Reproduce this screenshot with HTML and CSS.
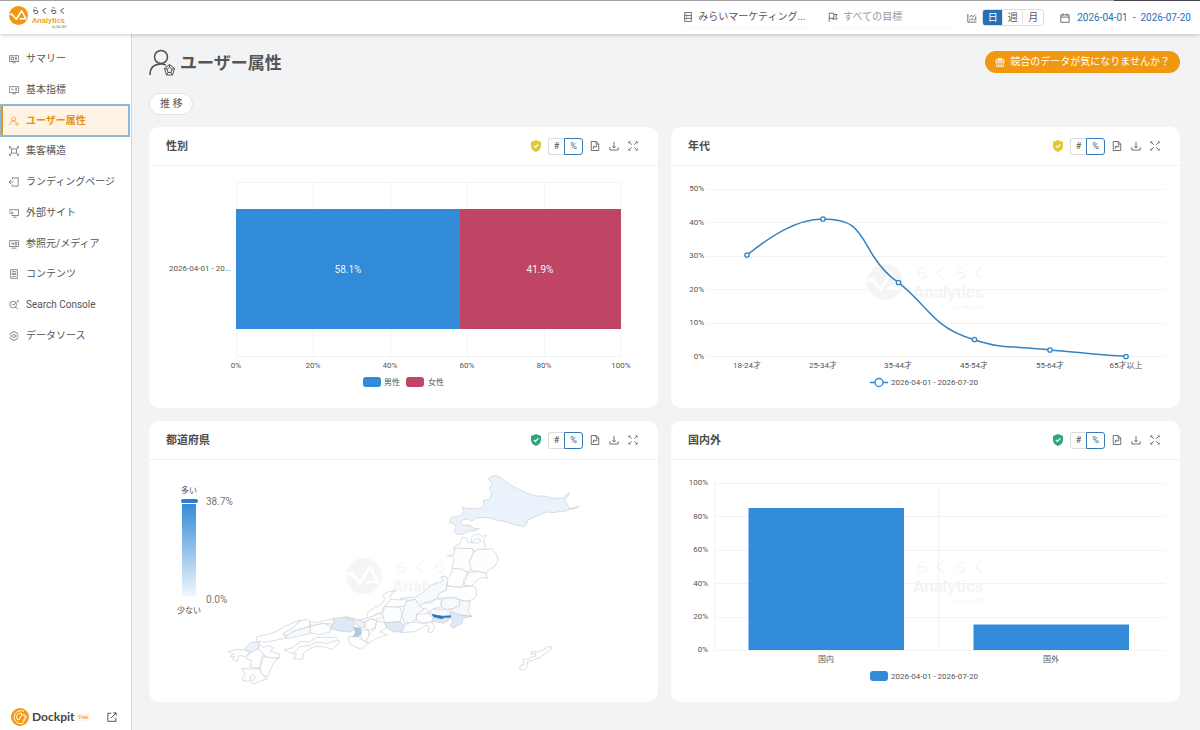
FILE: index.html
```html
<!DOCTYPE html>
<html lang="ja">
<head>
<meta charset="utf-8">
<meta name="viewport" content="width=device-width, initial-scale=1">
<title>ユーザー属性 | らくらくAnalytics</title>
<link rel="stylesheet" href="styles.css">
</head>
<body>
<svg class="defs" aria-hidden="true">
  <symbol id="mark" viewBox="0 0 36 36">
    <circle cx="18" cy="18" r="18" fill="currentColor"/>
    <path d="M1 17l4-2 9 10 10-16 8 15H20" fill="none" stroke="#fff" stroke-width="3" stroke-linejoin="round"/>
  </symbol>
  <symbol id="watermark" viewBox="0 0 130 56">
    <use href="#mark" x="0" y="2" width="36" height="36"/>
    <text class="wm-kana" x="48 67 86 105" y="16">らくらく</text>
    <text class="wm-name" x="46" y="36">Analytics</text>
    <text class="wm-by" x="87" y="47">by VALUES</text>
  </symbol>
  <symbol id="i-shield" viewBox="0 0 10 12">
    <path d="M5 0l5 2v4c0 3-2 5-5 6-3-1-5-3-5-6V2z" fill="currentColor"/>
    <path d="M2.800 5.800l1.600 1.600 3-3" fill="none" stroke="#fff" stroke-width="1.200"/>
  </symbol>
  <symbol id="i-file" viewBox="0 0 12 12"><path d="M1.500 .6h6L10.500 3.600v7.800h-9zM7.300.8v3h3M4 9.500V7h4V5M4 7l1.500-1.500"/></symbol>
  <symbol id="i-down" viewBox="0 0 12 12"><path d="M1 7.500v3.300h10V7.500M6 1v7M4 6.500L6 8.300 8 6.500"/></symbol>
  <symbol id="i-expand" viewBox="0 0 12 12"><path d="M1.500 1.500l3 3M10.500 1.500l-3 3M1.500 10.500l3-3M10.500 10.500l-3-3M1 2.800V1h1.800M9.200 1H11v1.800M1 9.200V11h1.800M9.200 11H11V9.200"/></symbol>
  <symbol id="i-user" viewBox="0 0 26 28">
    <circle cx="12" cy="8" r="6.500"/><path d="M1 26c0-7 4-11 11-11 2 0 4 .5 5 1.500"/>
    <path d="M20.500 15.500l5 4-2 6.500h-6l-2-6.500zM20.500 18l2.500 2.200-1 3.300h-3l-1-3.300zM20.500 15.500V18M25.500 19.500l-2.500.7M23.500 26l-1.500-2.500M17.500 26l1.500-2.500M15.500 19.500l2.500.7" stroke-width="1"/>
  </symbol>
</svg>

<header class="topbar">
  <a class="brand" href="#" aria-label="らくらくAnalytics">
    <svg width="60" height="26" viewBox="0 0 60 26">
      <use class="brand-mark" href="#mark" x="0" y="2" width="19" height="19"/>
      <text class="brand-kana" x="23 32 41 50" y="9">らくらく</text>
      <text class="brand-name" x="23" y="19">Analytics</text>
      <text class="brand-by" x="43" y="24">by VALUES</text>
    </svg>
  </a>
  <div class="filters">
    <label class="picker picker-project">
      <svg class="icon" viewBox="0 0 12 12"><path d="M2 .5h8v11H2zM2 4.300h8M2 7.600h8M4 2.600h.8M4 6h.8M4 9.300h.8"/></svg>
      <select aria-label="プロジェクト"><option>みらいマーケティング...</option></select>
    </label>
    <label class="picker picker-goal">
      <svg class="icon" viewBox="0 0 12 12"><path d="M1.500 11.500V1.500h5.500v6H1.500M7 3h4L9.500 5.500 11 8.500H5.500v-1"/></svg>
      <select aria-label="目標"><option>すべての目標</option></select>
    </label>
    <div class="unit">
      <svg class="icon" viewBox="0 0 12 12"><path d="M1 1v10h10.500M3.500 9V7M6 9V5.500M8.500 9V7M10.500 9V4M3 4.500l2.500-1.500 2 1.500L10 2"/></svg>
      <div class="segment" role="group" aria-label="集計単位">
        <button class="on" type="button">日</button><button type="button">週</button><button type="button">月</button>
      </div>
    </div>
    <button class="range" type="button">
      <svg class="icon" viewBox="0 0 12 12"><path d="M1 2.200h10v9H1zM1 5h10M3.500.5v3M8.500.5v3"/></svg>
      <span>2026-04-01</span><span>-</span><span>2026-07-20</span>
    </button>
  </div>
</header>

<div class="layout">
  <aside class="sidebar">
    <nav class="menu" aria-label="メニュー">
      <a href="#"><svg class="icon" viewBox="0 0 12 12"><path d="M.5 2h11v7H.5zM4 10.500h4M2.500 4h3v3h-3zM7 4h2.500M7 5.500h2.500M7 7h2.500"/></svg>サマリー</a>
      <a href="#"><svg class="icon" viewBox="0 0 12 12"><path d="M.5 2h11v7H.5zM4 10.500h4M2.500 5h2l1 1.500M7.500 4h2M7.500 5.500h2M7.500 7h2"/></svg>基本指標</a>
      <a class="current" href="#" aria-current="page"><svg class="icon" viewBox="0 0 12 12"><circle cx="5.500" cy="3.500" r="2.500"/><path d="M1 11c0-3 1.500-5 4.500-5 1.200 0 2 .4 2.800 1"/><circle cx="9.500" cy="9.500" r="1.500"/></svg>ユーザー属性</a>
      <a href="#"><svg class="icon" viewBox="0 0 12 12"><path d="M3 3.500h6v5H3zM1 1l2 2.500M11 1L9 3.500M1 11l2-2.500M11 11L9 8.500M.5 3V.8h2M9.500.8h2V3M.5 9v2.200h2M9.500 11.200h2V9"/></svg>集客構造</a>
      <a href="#"><svg class="icon" viewBox="0 0 12 12"><path d="M4 3V1h7v10H4V9M0 6h5M2.500 3.500L0 6l2.500 2.500"/></svg>ランディングページ</a>
      <a href="#"><svg class="icon" viewBox="0 0 12 12"><path d="M1 4V2h10.500v7H3M5 11h4M0 6h4M3 4l2 2-2 2"/></svg>外部サイト</a>
      <a href="#"><svg class="icon" viewBox="0 0 12 12"><path d="M.5 2h11v7H.5zM3 11h6M2.500 5.500h3M4.500 4l1.500 1.500L4.500 7M7.500 4h2v3h-2z"/></svg>参照元/メディア</a>
      <a href="#"><svg class="icon" viewBox="0 0 12 12"><path d="M2 .8h8v10.400H2zM4 3h4M4 5h4v1.500H4zM4 9h4"/></svg>コンテンツ</a>
      <a href="#"><svg class="icon" viewBox="0 0 12 12"><circle cx="5" cy="5.500" r="4"/><path d="M8 8.500l3 3M3 6l1.500-1L6 6l3-3.500M9.500.5h2M11 1v2"/></svg>Search Console</a>
      <a href="#"><svg class="icon" viewBox="0 0 12 12"><path d="M4.800.7h2.400l.5 1.600 1.700-.4 1.300 2.200L9.600 5.400v1.200l1.100 1.300-1.300 2.200-1.700-.4-.5 1.600H4.800l-.5-1.600-1.700.4-1.300-2.200 1.100-1.300V5.400L1.300 4.100l1.300-2.200 1.700.4z"/><circle cx="6" cy="6" r="1.800"/></svg>データソース</a>
    </nav>
    <div class="sidebar-foot">
      <a class="dockpit" href="#">
        <svg width="18" height="18" viewBox="0 0 18 18"><circle cx="9" cy="9" r="9" fill="#f29a11"/><path d="M13 3.500A6.500 6.500 0 1 0 12.500 15M10 5a4 4 0 0 0-3 7l2-1v-2l2-1z" fill="none" stroke="#fff"/><path d="M12 6l3 3-3 5" fill="none" stroke="#ffe0ae" stroke-width="2"/></svg>
        <strong>Dockpit</strong><small>Free</small>
      </a>
      <a class="external" href="#" aria-label="別タブで開く"><svg class="icon" viewBox="0 0 12 12"><path d="M5 1.500H1v9.700h9.700V7M4.500 7.500l6-6M7.500 1H11v3.500"/></svg></a>
    </div>
  </aside>

  <main class="content">
    <div class="heading">
      <h1><svg class="icon-title" viewBox="0 0 26 28"><use href="#i-user"/></svg>ユーザー属性</h1>
      <button class="promo" type="button"><svg class="icon" viewBox="0 0 12 12"><path d="M1 3.500h10V6H1zM2 6v5.300h8V6M4.700 3.500v7.800M7.300 3.500v7.800M6 3.500C4 3.500 3 2.500 3.500 1.500S6 1.500 6 3.500c0-2 2-3 2.500-2S8 3.500 6 3.500"/></svg>競合のデータが気になりませんか？</button>
    </div>
    <button class="trend" type="button">推 移</button>

    <div class="cards">
      <section class="card">
        <header class="card-head"><h2>性別</h2>
          <div class="tools">
            <svg class="shield warn" viewBox="0 0 10 12"><use href="#i-shield"/></svg>
            <div class="mode" role="group" aria-label="表示形式"><button type="button">#</button><button class="on" type="button">%</button></div>
            <div class="actions">
              <button type="button" aria-label="レポート"><svg class="icon"><use href="#i-file"/></svg></button>
              <button type="button" aria-label="ダウンロード"><svg class="icon"><use href="#i-down"/></svg></button>
              <button type="button" aria-label="拡大"><svg class="icon"><use href="#i-expand"/></svg></button>
            </div>
          </div>
        </header>
        <svg class="chart" viewBox="0 0 509 242" role="img" aria-label="性別の割合">
          <path class="grid" d="M87.500 16.500h384M87.500 190.500h384M87.500 16.500v174M164.500 16.500v174M241.500 16.500v174M318.500 16.500v174M395.500 16.500v174M471.500 16.500v174"/>
          <rect class="blue" x="87" y="43" width="224" height="120"/>
          <rect class="red" x="311" y="43" width="161" height="120"/>
          <text class="end" x="82" y="105">2026-04-01 - 20...</text>
          <g class="mid value"><text x="199" y="107">58.1%</text><text x="391" y="107">41.9%</text></g>
          <g class="mid"><text x="87" y="202">0%</text><text x="164" y="202">20%</text><text x="241" y="202">40%</text><text x="318" y="202">60%</text><text x="395" y="202">80%</text><text x="472" y="202">100%</text></g>
          <rect class="blue" x="214" y="211" width="18" height="10" rx="3"/><text x="235" y="219">男性</text>
          <rect class="red" x="257" y="211" width="18" height="10" rx="3"/><text x="279" y="219">女性</text>
        </svg>
      </section>

      <section class="card">
        <header class="card-head"><h2>年代</h2>
          <div class="tools">
            <svg class="shield warn" viewBox="0 0 10 12"><use href="#i-shield"/></svg>
            <div class="mode" role="group" aria-label="表示形式"><button type="button">#</button><button class="on" type="button">%</button></div>
            <div class="actions">
              <button type="button" aria-label="レポート"><svg class="icon"><use href="#i-file"/></svg></button>
              <button type="button" aria-label="ダウンロード"><svg class="icon"><use href="#i-down"/></svg></button>
              <button type="button" aria-label="拡大"><svg class="icon"><use href="#i-expand"/></svg></button>
            </div>
          </div>
        </header>
        <svg class="chart" viewBox="0 0 509 242" role="img" aria-label="年代の割合">
          <path class="grid" d="M37 23.500h457M37 56.500h457M37 90.500h457M37 123.500h457M37 157.500h457M37 190.500h457"/>
          <use class="wm" href="#watermark" x="196" y="96" width="130" height="56"/>
          <g class="end"><text x="33" y="25">50%</text><text x="33" y="59">40%</text><text x="33" y="92">30%</text><text x="33" y="126">20%</text><text x="33" y="159">10%</text><text x="33" y="193">0%</text></g>
          <path class="line" transform="translate(-1 4) scale(.33333)" d="M231 255C300 200 380 147 458 147C560 147 565 185 610 258C632 292 655 318 685 337C740 380 770 425 810 458C840 483 870 497 913 509C985 533 1010 529 1060 533C1110 536 1130 538 1140 540C1210 545 1290 556 1368 559"/>
          <g class="dots"><circle cx="76" cy="89" r="2.200"/><circle cx="152" cy="53" r="2.200"/><circle cx="227.500" cy="116.500" r="2.200"/><circle cx="303.500" cy="173.500" r="2.200"/><circle cx="379" cy="184" r="2.200"/><circle cx="455" cy="190.500" r="2.200"/></g>
          <g class="mid"><text x="76" y="202">18-24才</text><text x="152" y="202">25-34才</text><text x="227" y="202">35-44才</text><text x="303" y="202">45-54才</text><text x="379" y="202">55-64才</text><text x="455" y="202">65才以上</text></g>
          <path class="line" d="M199 216.500h18"/><g class="dots"><circle cx="208" cy="216.500" r="4"/></g>
          <text x="220" y="219">2026-04-01 - 2026-07-20</text>
        </svg>
      </section>

      <section class="card">
        <header class="card-head"><h2>都道府県</h2>
          <div class="tools">
            <svg class="shield good" viewBox="0 0 10 12"><use href="#i-shield"/></svg>
            <div class="mode" role="group" aria-label="表示形式"><button type="button">#</button><button class="on" type="button">%</button></div>
            <div class="actions">
              <button type="button" aria-label="レポート"><svg class="icon"><use href="#i-file"/></svg></button>
              <button type="button" aria-label="ダウンロード"><svg class="icon"><use href="#i-down"/></svg></button>
              <button type="button" aria-label="拡大"><svg class="icon"><use href="#i-expand"/></svg></button>
            </div>
          </div>
        </header>
        <svg class="chart" viewBox="0 0 509 242" role="img" aria-label="都道府県の割合">
          <defs><linearGradient id="scale" x1="0" y1="0" x2="0" y2="1"><stop offset="0" stop-color="#358cd8"/><stop offset="1" stop-color="#f1f7fd"/></linearGradient></defs>
          <use class="wm" href="#watermark" x="197" y="96" width="130" height="56"/>
          <text class="mid" x="40" y="33">多い</text>
          <rect x="32" y="39" width="17" height="4" rx="2" fill="#2b7fc8"/>
          <rect x="33" y="44" width="14" height="92" fill="url(#scale)"/>
          <text class="mid" x="40" y="153">少ない</text>
          <g class="scale-value"><text x="57" y="45">38.7%</text><text x="57" y="143">0.0%</text></g>
          <!-- 東日本 -->
          <g class="map" transform="translate(251 0) scale(.33333)">
            <path class="l2" d="M265 58L270 50 290 47 302 53 318 66 345 82 380 100 410 108 435 108 462 116 490 113 508 98 506 104 494 120 500 130 508 146 520 143 538 139 525 146 508 148 500 152 480 156 474 153 468 158 440 156 410 168 385 180 375 199 350 196 320 186 290 180 260 172 230 174 215 184 205 178 190 178 182 188 190 196 210 196 222 206 238 206 225 212 205 214 190 222 172 223 162 214 168 202 160 190 148 188 154 172 178 168 192 156 186 142 205 146 240 146 252 138 250 122 268 118 275 98 268 84 278 68Z"/>
            <path d="M186 233L200 234 204 248 216 248 226 236 240 238 242 246 228 250 216 248 212 234 222 224 240 223 244 229 258 226 250 240 258 268 235 268 222 276 218 266 160 266 165 258 180 252Z"/>
            <path d="M165 264L218 266 220 280 210 300 214 328 200 336 186 328 160 325 156 320 162 300 158 290 142 287 162 284Z"/>
            <path d="M222 276L235 268 258 268 276 266 290 284 294 300 286 318 266 330 258 340 232 334 214 332 208 305Z"/>
            <path d="M156 325L186 328 204 338 198 350 190 362 192 372 180 382 160 380 140 376 144 368 136 362 145 352 152 345Z"/>
            <path d="M204 338L232 334 258 340 262 356 246 352 228 362 216 378 192 376 196 362 200 350Z"/>
            <path class="l1" d="M124 366L128 362 124 350 136 348 144 360 140 376 140 390 118 400 112 416 90 424 72 430 60 440 45 418 20 424 0 415 20 412 45 412 70 396 92 376Z"/>
            <path d="M140 378L180 382 216 378 228 385 230 405 220 418 200 424 165 414 140 412 112 416 118 400 140 390Z"/>
            <path class="l1" d="M126 418L160 412 178 420 180 436 160 446 138 448 122 440Z"/>
            <path class="l1" d="M178 422L200 424 210 422 208 436 205 455 216 469 190 466 160 456 146 450 162 446 180 436Z"/>
            <path d="M60 436L72 430 94 428 110 416 124 420 122 440 100 446 84 458 78 446 66 446Z"/>
            <path class="l1" d="M84 458L100 447 138 448 150 460 152 468 120 468 96 462Z"/>
            <path class="l3" d="M150 468L152 456 170 464 216 469 190 474 186 490 160 504 150 498 158 484Z"/>
            <path class="l3" d="M98 472L128 477 148 474 146 482 130 490 98 484Z"/>
            <path d="M50 464L84 460 98 472 96 486 70 490 48 480Z"/>
            <path d="M0 518L10 500 30 486 70 490 96 486 104 502 95 518 84 516 88 500 78 496 64 505 45 515Z"/>
            <path class="l1" d="M6 428L20 424 45 418 62 440 72 450 50 462 48 480 34 488 14 490 6 470 12 445Z"/>
            <path class="l6" d="M96 463L110 466 128 469 152 467 152 472 135 472 125 476 100 470Z"/>
            <path d="M358 628L362 616 372 614 368 600 376 596 384 600 390 592 405 590 408 582 392 582 396 574 410 576 425 572 442 560 454 560 452 570 436 580 420 592 400 600 382 606 384 618 372 630Z"/>
          </g>
          <!-- 西日本 -->
          <g class="map" transform="translate(1 10) scale(.33333)">
            <path d="M650 440L655 425 690 405 706 388 698 376 712 366 738 362 722 374 722 388 712 400 700 412 698 425 680 432 655 445Z"/>
            <path d="M712 400L722 388 748 390 770 388 764 408 735 412 706 410Z"/>
            <path d="M698 425L706 410 750 412 756 430 750 455 704 458 700 440Z"/>
            <path class="l3" d="M704 458L750 455 762 465 758 484 735 486 710 474Z"/>
            <path d="M625 450L655 444 690 430 700 440 680 448 660 448 640 458Z"/>
            <path d="M645 455L665 447 680 455 676 474 655 480 645 470Z"/>
            <path d="M676 474L680 452 704 458 710 474 690 486 712 494 680 505 655 520 648 510 660 490Z"/>
            <path class="l2" d="M585 440L610 445 640 455 645 470 636 474 620 465 612 450Z"/>
            <path class="l3" d="M548 446L585 442 610 452 614 478 600 486 560 482 542 476Z"/>
            <path d="M634 480L655 480 656 500 645 515 632 505Z"/>
            <path d="M594 500L625 500 645 515 655 520 635 538 600 524Z"/>
            <path class="l5" d="M612 472L632 474 634 492 625 500 608 500 616 488Z"/>
            <path d="M480 454L500 458 548 446 552 462 520 460 482 468Z"/>
            <path d="M480 470L520 460 542 468 540 486 510 494 480 488Z"/>
            <path d="M400 490L430 470 452 452 470 448 480 454 480 468 430 484 408 498Z"/>
            <path class="l1" d="M408 498L430 484 480 470 480 490 440 500 410 506Z"/>
            <path d="M320 500L350 494 375 486 400 470 450 450 430 474 400 490 408 504 380 510 350 516 320 514Z"/>
            <path d="M402 540L430 532 450 515 480 516 500 502 560 502 570 518 545 538 520 530 490 530 460 550 458 568 430 566 440 552 420 548ZM430 550L450 530 480 526 500 516 530 520 565 510"/>
            <path class="l2" d="M290 530L300 518 328 516 325 532 312 545 285 540Z"/>
            <path d="M234 545L260 538 285 540 300 548 285 560 268 556 262 575 246 566 256 558 240 560 250 552Z"/>
            <path d="M328 524L340 532 355 526 370 534 362 544 388 552 388 562 360 566 335 550 325 534Z"/>
            <path d="M300 548L325 536 340 552 332 575 328 595 300 590 305 572 288 565Z"/>
            <path d="M340 560L386 566 370 580 352 622 335 612 330 595Z"/>
            <path d="M276 596L328 597 335 612 350 626 312 642 302 638 316 624 310 614 300 618 304 632 292 634 276 630 285 612Z"/>
          </g>
        </svg>
      </section>

      <section class="card">
        <header class="card-head"><h2>国内外</h2>
          <div class="tools">
            <svg class="shield good" viewBox="0 0 10 12"><use href="#i-shield"/></svg>
            <div class="mode" role="group" aria-label="表示形式"><button type="button">#</button><button class="on" type="button">%</button></div>
            <div class="actions">
              <button type="button" aria-label="レポート"><svg class="icon"><use href="#i-file"/></svg></button>
              <button type="button" aria-label="ダウンロード"><svg class="icon"><use href="#i-down"/></svg></button>
              <button type="button" aria-label="拡大"><svg class="icon"><use href="#i-expand"/></svg></button>
            </div>
          </div>
        </header>
        <svg class="chart" viewBox="0 0 509 242" role="img" aria-label="国内外の割合">
          <path class="grid" d="M43 23.500h451M43 56.500h451M43 90.500h451M43 123.500h451M43 157.500h451M43 190.500h451M43.500 23v167M267.500 23v167"/>
          <use class="wm" href="#watermark" x="196" y="96" width="130" height="56"/>
          <rect class="blue" x="77.500" y="48" width="155.500" height="142"/>
          <rect class="blue" x="302.500" y="164.500" width="155.500" height="25.500"/>
          <g class="end"><text x="37" y="25">100%</text><text x="37" y="59">80%</text><text x="37" y="92">60%</text><text x="37" y="126">40%</text><text x="37" y="159">20%</text><text x="37" y="192">0%</text></g>
          <g class="mid"><text x="155" y="202">国内</text><text x="380" y="202">国外</text></g>
          <rect class="blue" x="199" y="211" width="18" height="10" rx="3"/><text x="220" y="219">2026-04-01 - 2026-07-20</text>
        </svg>
      </section>
    </div>
  </main>
</div>
</body>
</html>
```

FILE: styles.css
```css
* { box-sizing: border-box; }

body {
  margin: 0;
  min-height: 100vh;
  display: flex;
  flex-direction: column;
  background: #f1f3f5;
  color: #555;
  font: 10px/16px Roboto, "Noto Sans CJK JP", sans-serif;
}

a { color: inherit; text-decoration: none; }

button, select {
  padding: 0;
  border: 0;
  background: none;
  color: inherit;
  font: inherit;
  appearance: none;
}

.defs { position: absolute; width: 0; height: 0; }

.icon {
  display: block;
  flex: none;
  width: 10px;
  height: 10px;
  fill: none;
  stroke: currentColor;
  stroke-width: 1;
}

/* Top bar */
.topbar {
  position: relative;
  display: flex;
  align-items: center;
  justify-content: space-between;
  height: 34px;
  padding: 0 9px;
  background: linear-gradient(to right, #a3a2a4 calc(100% - 86px), #47474c 0) top / 100% 1px no-repeat #fff;
  box-shadow: 0 1px 4px rgba(0, 0, 0, .22);
}

.brand svg { display: block; overflow: visible; }
.brand-mark { color: #f0980f; }
.brand-kana { font-size: 7px; fill: #444; font-weight: 500; }
.brand-name { font-size: 8px; fill: #f0980f; font-weight: 500; }
.brand-by { font-size: 3px; fill: #3b9a58; }

.filters { display: flex; align-items: center; padding-top: 1px; }
.picker { display: flex; align-items: center; gap: 5px; height: 22px; border-bottom: 1px solid #f6f6f6; }
.picker-project { width: 129px; margin-right: 16px; }
.picker-goal { width: 123px; margin-right: 16px; }
.picker-goal select { color: #999; }
.picker select { flex: 1; min-width: 0; }
.unit { display: flex; align-items: center; gap: 5px; margin-right: 16px; }

.segment { display: flex; border: 1px solid #ddd; border-radius: 3px; overflow: hidden; }
.segment button { width: 20px; height: 15px; line-height: 15px; border-right: 1px solid #e3e3e3; }
.segment button:last-child { border-right: 0; }
.segment .on { background: #2470b7; color: #fff; }

.range { display: flex; align-items: center; gap: 5px; color: #2b6fae; }
.range .icon { color: #555; margin-right: 2px; }

/* Sidebar */
.layout { display: flex; flex: 1; }

.sidebar {
  display: flex;
  flex-direction: column;
  justify-content: space-between;
  flex: none;
  width: 132px;
  padding: 10px 2px 4px 0;
  background: #fff;
  border-right: 1px solid #d6d9dc;
}

.menu { display: grid; grid-auto-rows: 1fr; height: 307px; }
.menu a { display: flex; align-items: center; gap: 7px; padding-left: 9px; }
.menu .icon { stroke-width: .8px; }
.menu .current {
  background: linear-gradient(to right, #e5961d 3px, #fff3e3 0);
  outline: 2px solid #8cb9d9;
  outline-offset: -1px;
  color: #ea920f;
  font-weight: 700;
}

.sidebar-foot { display: flex; align-items: center; justify-content: space-between; padding: 0 12px 0 11px; }
.dockpit { display: flex; align-items: center; gap: 3px; }
.dockpit strong { font: 700 12px/18px Lato, sans-serif; color: #444; }
.dockpit small { padding: 0 1px; background: #fff7e8; color: #f29a11; font-size: 5px; line-height: 8px; }
.external { color: #333; }

/* Page content */
.content { flex: 1; min-width: 0; padding: 14px 20px 28px 17px; }
.heading { display: flex; align-items: center; justify-content: space-between; height: 28px; margin-bottom: 17px; }

h1 { display: flex; align-items: center; gap: 5px; margin: 0; padding-top: 2px; font-size: 17px; line-height: 28px; color: #555; }
.icon-title { width: 26px; height: 28px; fill: none; stroke: #505050; stroke-width: 1.500px; }

.promo {
  display: flex;
  align-items: center;
  gap: 5px;
  height: 22px;
  padding: 0 10px;
  border-radius: 11px;
  background: #f0980f;
  color: #fff;
}

.trend {
  display: block;
  height: 22px;
  margin-bottom: 12px;
  padding: 0 10px;
  border: 1px solid #e2e4e6;
  border-radius: 11px;
  background: #fff;
}

.cards { display: grid; grid-template-columns: 1fr 1fr; gap: 13px; }
.card { min-width: 0; background: #fff; border-radius: 10px; }

.card-head {
  display: flex;
  align-items: center;
  justify-content: space-between;
  height: 39px;
  padding: 0 20px 0 17px;
  border-bottom: 1px solid #f0f1f2;
}

h2 { margin: 0; padding-top: 2px; font-size: 11px; line-height: 16px; color: #4d4d4d; }

.tools { display: flex; align-items: center; gap: 7px; }
.shield { width: 10px; height: 12px; }
.warn { color: #e0c92e; }
.good { color: #2fa581; }

.mode { display: flex; }
.mode button { height: 17px; font-size: 9px; line-height: 15px; border: 1px solid #dcdfe2; }
.mode button:first-child { width: 16px; border-right: 0; border-radius: 3px 0 0 3px; }
.mode .on { width: 19px; border-color: #3a78b3; border-radius: 0 3px 3px 0; color: #2b6fae; }

.actions { display: flex; gap: 9px; }

/* Charts */
.chart { display: block; width: 100%; height: auto; font-size: 8px; fill: #555; }
.grid { fill: none; stroke: #f3f3f4; }
.blue { fill: #318bd8; }
.red { fill: #c04564; }
.end { text-anchor: end; }
.mid { text-anchor: middle; }
.value { font-size: 10px; fill: #eef3f8; }
.scale-value { font-size: 10px; fill: #777; }
.line { fill: none; stroke: #3384c4; stroke-width: 1.500px; vector-effect: non-scaling-stroke; }
.dots { fill: #fff; stroke: #3384c4; stroke-width: 1.300px; }

.wm { color: #f5f5f6; fill: #f4f4f5; }
.wm-kana { font-size: 14px; }
.wm-name { font-size: 17px; font-weight: 700; }
.wm-by { font-size: 6px; }

.map path { fill: #fdfeff; stroke: #c8c8cb; stroke-width: .6px; stroke-linejoin: round; vector-effect: non-scaling-stroke; }
.map .l1 { fill: #f5fafe; }
.map .l2 { fill: #eaf3fc; }
.map .l3 { fill: #dceaf7; }
.map .l5 { fill: #a8cbea; }
.map .l6 { fill: #2477be; stroke: #2477be; }
```
